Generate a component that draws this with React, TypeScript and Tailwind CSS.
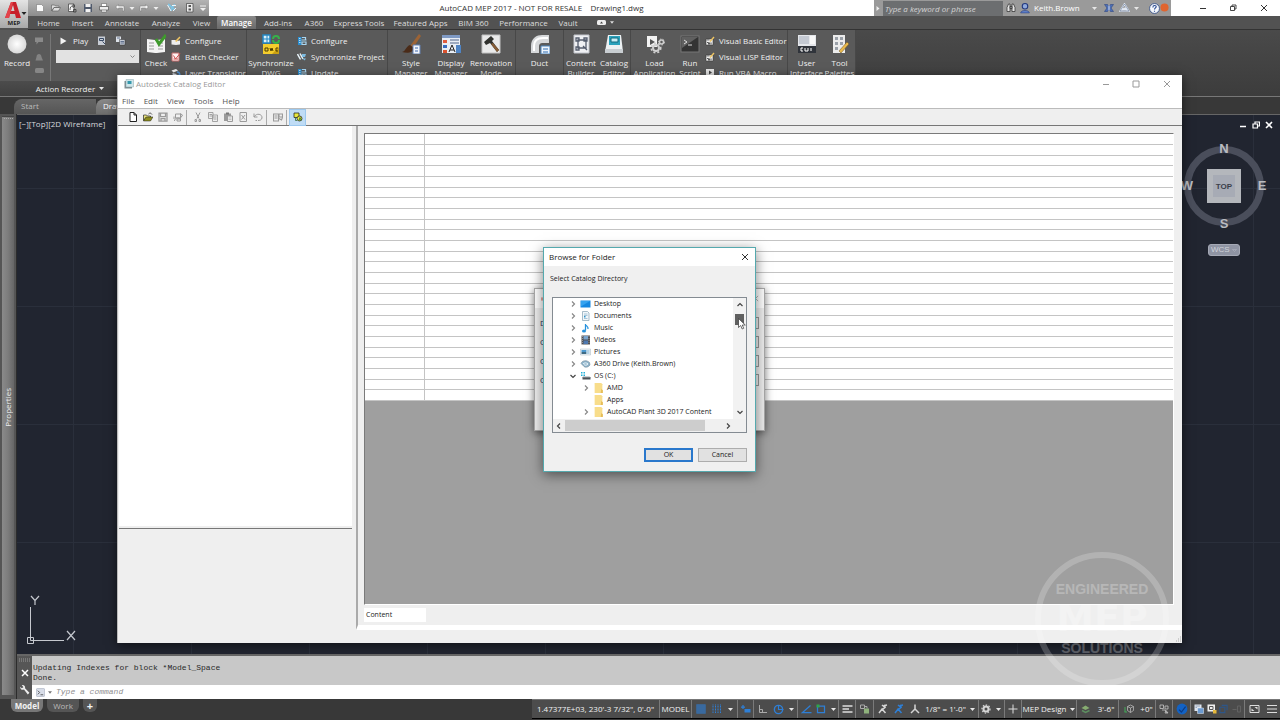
import type { ReactNode } from "react";

/* ---------- small drawing helpers ---------- */

type SvgProps = { w?: number; h?: number; vb?: string; children: ReactNode };

function Svg({ w = 10, h = 10, vb = "0 0 20 20", children }: SvgProps) {
  return (
    <svg width={w} height={h} viewBox={vb} fill="none" aria-hidden="true" className="shrink-0">
      {children}
    </svg>
  );
}

const Caret = ({ color = "#e6e6e6" }: { color?: string }) => (
  <Svg w={5} h={3} vb="0 0 10 6"><path d="M0 0h10L5 6z" fill={color} /></Svg>
);

const CloseX = ({ s = 8, color = "#333", sw = 1 }: { s?: number; color?: string; sw?: number }) => (
  <Svg w={s} h={s} vb="0 0 8 8"><path d="M1 1l6 6M7 1L1 7" stroke={color} strokeWidth={sw} /></Svg>
);

/* ---------- title bar ---------- */

const quickAccess: { label: string; w: string; icon: ReactNode }[] = [
  { label: "New", w: "w-4", icon: <path d="M3 3h10l4 4v10H3z" fill="#fafafa" stroke="#666" /> },
  { label: "Open", w: "w-4", icon: <path d="M1 16V4h6l2 2h7v3H6zM2 16L6 9h13l-4 7z" fill="#dcdcdc" stroke="#666" strokeWidth="1.4" /> },
  { label: "Open from web", w: "w-4", icon: <><path d="M3 2h11v15H3z" fill="#f4f4f4" stroke="#444" strokeWidth="1.5" /><path d="M6 14c0-6 2-8 6-8M12 3v6l4-3zM13 13h5v5h-5z" stroke="#333" strokeWidth="1.5" /></> },
  { label: "Save", w: "w-4", icon: <><path d="M2 2h16v16H2z" fill="#505a6c" /><path d="M5 2h10v6H5zM5 12h10v6H5z" fill="#f2f2f2" /></> },
  { label: "Plot", w: "w-4", icon: <><path d="M5 1h10v6H5zM5 12h10v6H5z" fill="#fff" stroke="#555" /><path d="M1 7h18v7H1z" fill="#eee" stroke="#555" strokeWidth="1.4" /></> },
  { label: "Undo", w: "w-4", icon: <path d="M7 3L1 8l6 5v-3h8v6h3V6H7z" fill="#f4f4f4" stroke="#777" /> },
  { label: "Undo list", w: "w-2", icon: <path d="M5 8h10l-5 6z" fill="#eee" /> },
  { label: "Redo", w: "w-4", icon: <path d="M13 3l6 5-6 5v-3H5v6H2V6h11z" fill="#f4f4f4" stroke="#777" /> },
  { label: "Redo list", w: "w-2", icon: <path d="M5 8h10l-5 6z" fill="#eee" /> },
  { label: "Synchronize", w: "w-6", icon: <><path d="M2 3c5 0 6 8 14 10M16 3C12 6 8 10 8 16" stroke="#7fc3e2" strokeWidth="4" /><path d="M1 4l7 12M10 5h8M12 16l6-6" stroke="#eef6fa" strokeWidth="2" /></> },
  { label: "Project", w: "w-3", icon: <><path d="M3 1h13v17H3z" fill="#ececec" stroke="#444" strokeWidth="1.4" /><path d="M7 4h5v4H7zM7 11h5v4H7z" fill="#555" /></> },
];

function TitleBar() {
  return (
    <div className="flex h-4 bg-white">
      <div className="flex items-center bg-gradient-to-b from-[#b4b4b4] to-[#8c8c8c] pl-1">
        {quickAccess.map((q) => (
          <button key={q.label} aria-label={q.label} className={`flex justify-center ${q.w}`}>
            <Svg>{q.icon}</Svg>
          </button>
        ))}
        <button aria-label="Customize toolbar" className="flex w-[13px] justify-center">
          <Svg w={6} h={7} vb="0 0 12 14"><path d="M0 1h12v2H0zM0 6h12l-6 6z" fill="#f0f0f0" /></Svg>
        </button>
      </div>
      <h1 className="flex-1 whitespace-pre text-center text-[8px] leading-[16px] text-[#333]">
        {"AutoCAD MEP 2017 - NOT FOR RESALE    Drawing1.dwg"}
      </h1>
      <div className="flex w-[297px] items-center bg-[#9a9a9a] text-[8px]">
        <span className="flex w-2 justify-center"><Svg w={4} h={5} vb="0 0 8 10"><path d="M1 0l6 5-6 5z" fill="#f0f0f0" /></Svg></span>
        <input aria-label="Search" placeholder="Type a keyword or phrase" className="ml-px h-[15px] w-[120px] bg-[#6c6e70] px-[2px] italic text-white placeholder:text-[#d4d4d4]" />
        <button aria-label="Find" className="flex w-4 justify-center">
          <Svg><path d="M2 17V9l3-7h3v15zM18 17V9l-3-7h-3v15zM8 7h4v4H8z" fill="#e4e4e4" stroke="#333" strokeWidth="1.5" /></Svg>
        </button>
        <button className="flex w-[78px] items-center gap-[3px] text-white">
          <Svg w={12} h={11}><circle cx="10" cy="6" r="5" fill="#8fa9dc" stroke="#22397f" strokeWidth="2" /><path d="M2 18c1-6 15-6 16 0z" fill="#5f7fc4" stroke="#22397f" /></Svg>
          <span className="flex-1 text-left">Keith.Brown</span>
          <Caret />
        </button>
        <button aria-label="Exchange" className="ml-1 flex w-4 justify-center">
          <Svg><path d="M1 3h6l3 4 3-4h6l-5 7 5 7h-6l-3-4-3 4H1l5-7z" fill="#4f70b5" stroke="#203a7c" /><path d="M10 5v10" stroke="#d9e4fa" strokeWidth="2" /></Svg>
        </button>
        <button aria-label="A360" className="flex w-6 items-center justify-center gap-1">
          <Svg w={11}><path d="M10 2L1 16h18z M5 13l8-3 2 6" stroke="#e2e8f2" strokeWidth="3" /><path d="M10 2L1 16h18z" stroke="#4d6385" /></Svg>
          <Caret />
        </button>
        <button aria-label="Help" className="ml-2 flex items-start">
          <Svg w={11} h={11}><circle cx="10" cy="10" r="9" fill="#f4f7fb" stroke="#304c86" strokeWidth="1.5" /><path d="M7 8c0-5 7-4 6-1-.5 2-3 2-3 5M10 14v2" stroke="#284a92" strokeWidth="2" /></Svg>
          <Svg w={9} h={9}><circle cx="10" cy="10" r="9" fill="#e0652f" /></Svg>
        </button>
      </div>
      <div className="flex w-[109px] items-center justify-end">
        <button aria-label="Minimize" className="flex w-[30px] justify-center"><Svg w={8} h={8} vb="0 0 8 8"><path d="M1 4.5h6" stroke="#333" /></Svg></button>
        <button aria-label="Restore" className="flex w-[30px] justify-center"><Svg w={8} h={8} vb="0 0 8 8"><path d="M1.500 2.500h4v4h-4zM3 2.500v-1.500h4v4H5.500" stroke="#333" strokeWidth=".9" /></Svg></button>
        <button aria-label="Close" className="flex w-[32px] justify-center"><CloseX /></button>
      </div>
    </div>
  );
}

/* ---------- ribbon ---------- */

const tabs: [string, string][] = [
  ["Home", "w-[37px]"], ["Insert", "w-[31px]"], ["Annotate", "w-[48px]"], ["Analyze", "w-[40px]"],
  ["View", "w-[31px]"], ["Manage", "w-[39px]"], ["Add-ins", "w-[44px]"], ["A360", "w-[28px]"],
  ["Express Tools", "w-[62px]"], ["Featured Apps", "w-[61px]"], ["BIM 360", "w-[45px]"],
  ["Performance", "w-[55px]"], ["Vault", "w-[34px]"],
];

function RibbonTabs() {
  return (
    <nav className="flex h-[14px] items-stretch border-b border-[#333] bg-[#525252] pl-[2px] text-[8px] leading-[13px] text-[#dcdcdc]">
      {tabs.map(([name, w]) => (
        <a
          key={name}
          href="#"
          className={`block whitespace-nowrap text-center ${w} ${name === "Manage" ? "rounded-t-[2px] bg-gradient-to-b from-[#8a8a8a] to-[#6a6a6a] font-semibold text-white" : ""}`}
        >
          {name}
        </a>
      ))}
      <button aria-label="Minimize ribbon" className="ml-3 flex items-center gap-1">
        <Svg w={9} h={5} vb="0 0 18 10"><rect width="18" height="10" rx="3" fill="#eee" /><path d="M6 7l3-4 3 4z" fill="#444" /></Svg>
        <Svg w={4} h={3} vb="0 0 10 6"><path d="M0 0h10L5 6z" fill="#ddd" /></Svg>
      </button>
    </nav>
  );
}

function BigButton({ w, lines, icon }: { w: string; lines: string[]; icon: ReactNode }) {
  return (
    <button className={`flex flex-col items-center ${w}`}>
      <Svg w={20} h={20}>{icon}</Svg>
      <span className="mt-1 flex flex-col items-center whitespace-nowrap leading-[10px]">
        {lines.map((l) => <span key={l}>{l}</span>)}
      </span>
    </button>
  );
}

function SmallList({ items }: { items: [string, ReactNode][] }) {
  return (
    <div className="-mt-px flex flex-col">
      {items.map(([label, icon]) => (
        <button key={label} className="flex h-4 items-center gap-1 whitespace-nowrap">
          <Svg>{icon}</Svg>
          {label}
        </button>
      ))}
    </div>
  );
}

function Panel({ w, children }: { w: string; children: ReactNode }) {
  return <section className={`flex shrink-0 border-r border-[#484848] ${w}`}>{children}</section>;
}

const syncIcon = <><path d="M2 2h7v16H2z" fill="#2d8fd0" /><path d="M4 5h3M4 9h3M4 13h3" stroke="#d8f0ff" strokeWidth="1.6" /><path d="M10 3h7v5M19 8H9M10 12h8v5h-8z" stroke="#a8d6f2" strokeWidth="2.4" /></>;
const syncProjectIcon = <><path d="M1 4l6 11M6 3l6 11" stroke="#e8f4fa" strokeWidth="3" /><path d="M10 4h8l-2 6h-6zM11 13h7l-3 4z" fill="#7dbbe0" /></>;
const editorIcon = <><path d="M2 6h14v12H2z" fill="#ececec" stroke="#333" /><path d="M4 13h3v4M9 13v4M12 13v4" stroke="#333" strokeWidth="1.6" /><path d="M9 10l8-9 2 2-8 9z" fill="#f0c560" /><path d="M2 6h7v3H2z" fill="#888" /></>;

function Ribbon() {
  return (
    <div className="flex h-[67px] border-b border-[#777] bg-[#5a5a5a] text-[8px] text-[#f0f0f0]">
      <Panel w="w-[141px] flex-col">
        <div className="flex h-[51px] pt-1">
          <button className="flex w-[34px] flex-col items-center">
            <Svg w={20} h={20}>
              <defs><radialGradient id="rec"><stop offset="0" stopColor="#fff" /><stop offset="1" stopColor="#d9d9d9" /></radialGradient></defs>
              <circle cx="10" cy="10" r="9.500" fill="url(#rec)" />
            </Svg>
            <span className="mt-1 leading-[10px]">Record</span>
          </button>
          <div className="flex w-[17px] flex-col items-center gap-[6px] border-r border-[#777] pr-[6px] pt-[2px]">
            <Svg><path d="M2 3h16v9h-9l-4 5v-5H2z" fill="#8a8a8a" /></Svg>
            <Svg><path d="M5 10c0-8 10-8 10 0l3 7H3z" fill="#838383" /></Svg>
            <Svg w={9} h={5} vb="0 0 18 10"><rect width="18" height="10" rx="3" fill="#868686" /></Svg>
          </div>
          <div className="flex flex-1 flex-col pl-[5px]">
            <div className="flex h-[14px] items-center">
              <button className="ml-1 flex items-center gap-[6px]"><Svg w={7} h={8} vb="0 0 14 16"><path d="M1 1l12 7-12 7z" fill="#f4f4f4" /></Svg>Play</button>
              <button aria-label="Manage macros" className="ml-[9px]"><Svg><path d="M2 1h14v17H2z" fill="#c8cdd5" /><path d="M5 5h8v4H5zM11 11l5 5" stroke="#394a65" strokeWidth="2" /></Svg></button>
              <button aria-label="Preferences" className="ml-2"><Svg w={11}><path d="M1 1h10v11H1z" fill="#dce1e8" /><path d="M8 7h11v11H8z" fill="#c4cad5" stroke="#333" /><path d="M3 4h6M10 11h7M10 14h7" stroke="#425475" strokeWidth="1.500" /></Svg></button>
            </div>
            <select aria-label="Macro" className="mt-[2px] h-[13px] w-[83px] appearance-none bg-[#e2e2e2] bg-[url('data:image/svg+xml,%3Csvg%20xmlns=%22http://www.w3.org/2000/svg%22%20width=%225%22%20height=%224%22%3E%3Cpath%20d=%22M.5%20.5l2%202%202-2%22%20fill=%22none%22%20stroke=%22%23888%22/%3E%3C/svg%3E')] bg-[position:right_4px_center] bg-no-repeat">
              <option value=""></option>
            </select>
          </div>
        </div>
        <button className="flex flex-1 items-center justify-center gap-1 bg-gradient-to-b from-[#4c4c4c] to-[#404040]">Action Recorder <Caret /></button>
      </Panel>
      <Panel w="w-[106px] pt-1">
        <BigButton w="w-[30px]" lines={["Check"]} icon={<><path d="M1 5l8 1 1 1 1-1 8-1v13l-8 1h-2l-8-1z" fill="#f4f4f4" /><path d="M3 9h5M3 12h5M3 15h5M12 9h5M12 12h5M12 15h5" stroke="#999" /><path d="M10 5l3 5 7-9" stroke="#3f9a2d" strokeWidth="3" /></>} />
        <SmallList items={[
          ["Configure", <><path d="M1 8h8l2 2 7-1v8l-8 1-9-1z" fill="#ececec" /><path d="M8 10L17 1l2 2-8 9z" fill="#ecc464" /></>],
          ["Batch Checker", <><path d="M2 2h14v16H2z" fill="#fdf1f1" stroke="#c56b6b" strokeWidth="2" /><path d="M5 7l4 7 9-11M5 14h9" stroke="#cf4d4d" strokeWidth="2" /></>],
          ["Layer Translator", <><path d="M1 5l9-3 4 3-9 4z" fill="#f4f4f4" /><path d="M3 10l8 2v6H4z" fill="#d7dde6" /><path d="M12 8c5 0 6 3 6 8l-5-2" stroke="#5496d8" strokeWidth="3" /></>],
        ]} />
      </Panel>
      <Panel w="w-[141px] pt-1">
        <BigButton w="w-[48px]" lines={["Synchronize", "DWG"]} icon={<><path d="M2 10h16v10H2z" fill="#f5cd2c" /><path d="M11 20l7-7v7z" fill="#caa012" /><path d="M2 1h7v8H2z" fill="#daf0fa" stroke="#2587c2" strokeWidth="1.500" /><path d="M2 5h7M6 1v8" stroke="#2587c2" /><path d="M12 5a3 3 0 0 1 6 0M18 6a3 3 0 0 1-6 0" stroke="#36b24a" strokeWidth="2" /><path d="M4 14h3v3H4zM9 14l1 3 1-3 1 3M17 14h-2v3h2" stroke="#4b3c00" /></>} />
        <div className="w-[2px]" />
        <SmallList items={[["Configure", syncIcon], ["Synchronize Project", syncProjectIcon], ["Update", syncIcon]]} />
      </Panel>
      <Panel w="w-[128px] pt-1 pl-[2px]">
        <BigButton w="w-[42px]" lines={["Style", "Manager"]} icon={<><path d="M9 12L18 0l2 2-8 12z" fill="#9c6335" /><path d="M9 11l4 3c-2 6-8 5-12 4 4-1 4-6 8-7z" fill="#4a2b18" /><path d="M12 11h7v9h-7z" fill="#f2f5fa" stroke="#6481b3" /><path d="M14 14h3M14 17h3" stroke="#3d66ac" /></>} />
        <BigButton w="w-[38px]" lines={["Display", "Manager"]} icon={<><path d="M1 1h18v18H1z" fill="#e9eef5" /><path d="M1 1h18v3H1z" fill="#7f9ac4" /><path d="M2 6h4v3H2z" fill="#e15b3d" /><path d="M2 11h4v3H2z" fill="#386bc0" /><path d="M2 16h4v3H2z" fill="#d9522e" /><path d="M9 6h9M9 9h9" stroke="#52668a" /><path d="M8 18l3-7 3 7M9 16h4" stroke="#222" /><path d="M15 11h5v8h-5z" fill="#4f84c4" /></>} />
        <BigButton w="w-[42px]" lines={["Renovation", "Mode"]} icon={<><path d="M1 1h18v18H1z" fill="#eaeaea" stroke="#c2c2c2" /><path d="M3 8l7-6 3 3-2 2 7 9-2 2-7-9-4 2z" fill="#31322e" /><path d="M12 9l6 7-2 2-6-8z" fill="#875d36" /></>} />
      </Panel>
      <Panel w="w-[48px] pt-1">
        <BigButton w="w-[47px]" lines={["Duct"]} icon={<><path d="M1 19V12C1 4 7 1 12 1h7v8h-6c-3 0-4 1-4 4v6z" fill="#d6d8da" /><path d="M4 17v-5c0-6 4-8 9-8h5" stroke="#fff" strokeWidth="2" /><path d="M11 12h9v8h-9z" fill="#eef4fb" stroke="#4b84bd" /><path d="M13 15h5M13 18h5" stroke="#2c6cb2" /></>} />
      </Panel>
      <Panel w="w-[67px] pt-1">
        <BigButton w="w-[34px]" lines={["Content", "Builder"]} icon={<><path d="M3 1h15v18H3z" fill="#f0f1f4" stroke="#c2c5cc" /><path d="M7 6h8v8H7z M5 4h3v3H5zM13 4h3v3h-3zM5 13h3v3H5zM12 12l4 4" stroke="#555d6e" strokeWidth="1.300" /></>} />
        <BigButton w="w-[32px]" lines={["Catalog", "Editor"]} icon={<><path d="M4 1h13l2 17H1z" fill="#edf1f3" /><path d="M5 2h11v9H5z" fill="#2ba2bc" /><path d="M7 4h7v4H7z" fill="#c9eef5" stroke="#126b80" /><path d="M1 15h18v4H1z" fill="#c9ced2" /></>} />
      </Panel>
      <Panel w="w-[157px] pt-1">
        <BigButton w="w-[47px]" lines={["Load", "Application"]} icon={<><path d="M2 2h10v11H2z" fill="#f3f3f3" /><path d="M5 5l5 3-5 3z" fill="#555" /><circle cx="11" cy="14" r="3" stroke="#d0d0d0" strokeWidth="2" /><circle cx="16.500" cy="8" r="2" stroke="#d0d0d0" strokeWidth="1.500" /><circle cx="11" cy="14" r="4.800" stroke="#d0d0d0" strokeWidth="1.500" strokeDasharray="2 2" /><circle cx="16.500" cy="8" r="3" stroke="#d0d0d0" strokeDasharray="1.500 1.500" /></>} />
        <BigButton w="w-[24px]" lines={["Run", "Script"]} icon={<><rect x="1" y="2" width="18" height="16" fill="#333" stroke="#777" /><path d="M2 3h16L2 14z" fill="#606060" /><path d="M4 6l3 2-3 2M8 11h4" stroke="#ddd" /></>} />
        <div className="w-[3px]" />
        <SmallList items={[
          ["Visual Basic Editor", editorIcon],
          ["Visual LISP Editor", editorIcon],
          ["Run VBA Macro", <><path d="M2 2h16v14H2z" fill="#e6e6e6" /><path d="M8 5l6 4-6 4z" fill="#444" /></>],
        ]} />
      </Panel>
      <Panel w="w-[68px] pt-1 pl-px">
        <BigButton w="w-[35px]" lines={["User", "Interface"]} icon={<><path d="M1 1h18v18H1z" fill="#e4e6ea" /><path d="M2 2h10v8H2z" fill="#c4c9d2" /><path d="M13 2h5v8h-5z" fill="#f8f8f8" /><path d="M1 12h18v7H1z" fill="#30343b" /><path d="M6 14H4v3h2M8 14v3h3v-3M14 14v3" stroke="#fff" /></>} />
        <BigButton w="w-[31px]" lines={["Tool", "Palettes"]} icon={<><path d="M3 1h12v18H3z" fill="#ececec" /><path d="M5 3h3v3H5zM10 3h3v3h-3zM5 8h3v3H5zM10 8h3v3h-3zM5 13h3v3H5z" fill="#9aa0a8" /><path d="M9 17l8-9 2 2-8 9z" fill="#e8b84c" stroke="#6b5220" strokeWidth=".5" /></>} />
      </Panel>
      <div className="flex-1 bg-gradient-to-b from-[#4a4a4a] to-[#3c3c3c]" />
    </div>
  );
}

/* ---------- drawing area ---------- */

function ViewCube() {
  return (
    <div className="absolute right-[12px] top-[23px] flex flex-col items-center font-['Liberation_Sans',sans-serif]">
      <svg width="88" height="96" viewBox="0 0 88 96" aria-label="View cube" className="block">
        <circle cx="44" cy="48" r="36.500" fill="none" stroke="#4a4e5b" strokeWidth="7" />
        <rect x="27" y="31" width="34" height="34" fill="#b4b7bc" />
        <rect x="33" y="37" width="22" height="22" fill="#a7abb5" />
        <g fontWeight="bold" fill="#b9bbc0" textAnchor="middle">
          <text x="44" y="15" fontSize="13">N</text>
          <text x="44" y="90" fontSize="13">S</text>
          <text x="82" y="52" fontSize="13">E</text>
          <text x="7" y="52" fontSize="13">W</text>
          <text x="44" y="51" fontSize="8" fill="#3b3f4b">TOP</text>
        </g>
      </svg>
      <button className="mt-[10px] flex h-[12px] w-8 items-center justify-between rounded-[3px] border border-[#a5a9b5] bg-[#8f94a3] px-[2px] text-[8px] leading-none text-[#d0d3da]">
        WCS <Svg w={5} h={3} vb="0 0 10 6"><path d="M1 1h8L5 5z" stroke="#b5b9c4" /></Svg>
      </button>
    </div>
  );
}

function DrawingArea() {
  return (
    <main className="relative flex flex-1 flex-col overflow-hidden border-t border-[#666] bg-[#212530] bg-[linear-gradient(to_right,#2a2f3b_1px,transparent_1px),linear-gradient(to_bottom,#2a2f3b_1px,transparent_1px)] bg-[size:118px_118px] bg-[position:56px_73px] text-[#d8dade]">
      <div className="flex items-start justify-between pl-[2px] pr-[7px] pt-[2px] text-[8px]">
        <span className="leading-[14px]">[−][Top][2D Wireframe]</span>
        <div className="flex items-center gap-[5px] pt-1">
          <button aria-label="Minimize drawing"><Svg w={8} h={8} vb="0 0 8 8"><path d="M1 5.500h6" stroke="#fff" strokeWidth="1.500" /></Svg></button>
          <button aria-label="Restore drawing"><Svg w={8} h={8} vb="0 0 8 8"><path d="M1 3h4.500v4H1zM3 2.500V1h4.500v4H6" stroke="#fff" strokeWidth="1.200" /></Svg></button>
          <button aria-label="Close drawing"><CloseX color="#fff" sw={1.6} /></button>
        </div>
      </div>
      <ViewCube />
      <svg width="60" height="54" viewBox="0 0 60 54" className="mb-[6px] ml-2 mt-auto block" aria-label="UCS axes">
        <path d="M5.500 13v30M9 46.500h30M2.500 43.500h6v6h-6z M5.500 40v6.500h6" fill="none" stroke="#c5c8ce" />
        <path d="M6 2l4 4.500L14 2M10 6v5M42 37l8 9M50 37l-8 9" fill="none" stroke="#c5c8ce" strokeWidth="1.200" />
      </svg>
    </main>
  );
}

function PropertiesDock() {
  return (
    <aside className="flex w-[17px] border-r border-[#2c2c2c] bg-[#555] p-[2px] pb-1">
      <div className="flex flex-1 flex-col items-center border-t border-[#444] bg-gradient-to-r from-[#8a8a8a] via-[#7c7c7c] to-[#666]">
        <Svg w={9} h={4} vb="0 0 9 4"><path d="M0 1.500h9" stroke="#aaa" strokeDasharray="1 1" /></Svg>
        <span className="mb-[268px] mt-auto rotate-180 text-[8px] leading-[12px] text-[#ececec] [writing-mode:vertical-rl]">Properties</span>
      </div>
    </aside>
  );
}

function CommandLine() {
  return (
    <section className="flex h-[45px] border-t-2 border-[#666] font-['Liberation_Mono',monospace] text-[8px]">
      <div className="flex w-[15px] flex-col items-center justify-between bg-[#565656] py-[2px]">
        <Svg w={11} h={4} vb="0 0 11 4"><path d="M0 1h11M0 3h11" stroke="#999" strokeDasharray="1 1" /></Svg>
        <CloseX s={8} color="#fff" sw={1.5} />
        <Svg w={11} h={14} vb="0 0 20 24"><path d="M2 6c0 5 4 7 7 5l7 9 3-3-8-8c1-4-2-7-6-6l3 4-3 2z" fill="#ececec" /></Svg>
      </div>
      <div className="flex flex-1 flex-col">
        <div className="flex flex-1 flex-col justify-end bg-[#c8c8c8] px-px pb-[2px] leading-[10px] text-[#2a2a2a]">
          <p>Updating Indexes for block *Model_Space</p>
          <p>Done.</p>
        </div>
        <label className="flex h-[14px] items-center gap-[3px] bg-white pl-1">
          <Svg w={9} h={9}><rect x="1" y="1" width="18" height="18" rx="2" fill="#d8dde8" stroke="#8c96ab" /><path d="M4 6l4 4-4 4M10 15h6" stroke="#333" strokeWidth="1.600" /></Svg>
          <Svg w={4} h={3} vb="0 0 10 6"><path d="M0 0h10L5 6z" fill="#777" /></Svg>
          <input aria-label="Command" placeholder="Type a command" className="ml-px flex-1 italic outline-none placeholder:text-[#909090]" />
        </label>
      </div>
    </section>
  );
}

/* ---------- status bar ---------- */

function Cell({ w, sep, children, label }: { w: string; sep?: boolean; children: ReactNode; label?: string }) {
  return (
    <button aria-label={label} className={`flex h-[18px] shrink-0 items-center justify-center whitespace-nowrap ${w} ${sep ? "border-r border-[#7a7a7a]" : ""}`}>
      {children}
    </button>
  );
}

const blue = "#2e7fd6";
const person = (c: string) => <><path d="M8 2l6 5-5 4 6 7M9 9l-7 9M13 3l5-1" stroke={c} strokeWidth="3" /><circle cx="13" cy="4" r="2.500" fill={c} /></>;

function StatusBar() {
  return (
    <footer className="flex h-[21px] items-start justify-between bg-[#383838] text-[8px] text-[#f2f2f2]">
      <div className="flex items-start pl-[11px]">
        <button className="h-[13px] w-[32px] rounded-b-[6px] bg-[#777] font-bold leading-[13px]">Model</button>
        <button className="ml-1 h-[13px] w-[32px] rounded-b-[6px] bg-[#555] leading-[13px] text-[#bbb]">Work</button>
        <button className="ml-1 h-[13px] w-[14px] rounded-b-[6px] bg-[#555] text-[11px] font-bold leading-[12px]">+</button>
      </div>
      <div className="flex border-y border-b-black border-t-[#777] bg-[#4c4c4c]">
        <Cell w="w-[128px]" sep>1.47377E+03, 230'-3 7/32", 0'-0"</Cell>
        <Cell w="w-[32px]" sep>MODEL</Cell>
        <Cell w="w-[18px]" label="Grid"><Svg><path d="M2 1v18M6 1v18M10 1v18M14 1v18M18 1v18M1 2h18M1 6h18M1 10h18M1 14h18M1 18h18" stroke={blue} strokeWidth="1.500" /></Svg></Cell>
        <Cell w="w-[14px]" label="Snap"><Svg><path d="M2 1v18M7 1v18M12 1v18M17 1v18" stroke={blue} strokeWidth="2" strokeDasharray="2 1" /></Svg></Cell>
        <Cell w="w-[14px]" sep label="Snap menu"><Caret /></Cell>
        <Cell w="w-[16px]" sep label="Dynamic input"><Svg w={11}><path d="M1 6h8M5 2v8" stroke={blue} strokeWidth="2.500" /><path d="M8 10h12v7H8z" fill={blue} /></Svg></Cell>
        <Cell w="w-[17px]" label="Ortho"><Svg><path d="M3 2v15h15M3 11h6v6" stroke="#aaa" strokeWidth="2" /></Svg></Cell>
        <Cell w="w-[14px]" label="Polar"><Svg w={11} h={11}><circle cx="10" cy="10" r="7.500" stroke={blue} strokeWidth="2.500" /><path d="M10 2v8h9" stroke={blue} strokeWidth="2" /></Svg></Cell>
        <Cell w="w-[13px]" sep label="Polar menu"><Caret /></Cell>
        <Cell w="w-[16px]" label="Object tracking"><Svg w={11}><path d="M18 3L2 17h18" stroke={blue} strokeWidth="2.500" /></Svg></Cell>
        <Cell w="w-[14px]" label="Object snap"><Svg><path d="M3 4h14v13H3z" stroke={blue} strokeWidth="2.500" /><rect x="1" y="1" width="6" height="6" fill="#2fa64a" /></Svg></Cell>
        <Cell w="w-[11px]" sep label="Object snap menu"><Caret /></Cell>
        <Cell w="w-[17px]" sep label="Lineweight"><Svg w={11}><path d="M0 4h20M0 10h13M0 16h20" stroke="#ddd" strokeWidth="3" /></Svg></Cell>
        <Cell w="w-[18px]" sep label="Cycling"><Svg><path d="M1 2h8v7H1zM9 5h5v4" stroke="#aaa" strokeWidth="2" /><path d="M8 9h10v10H8z" fill="#8fb27c" /></Svg></Cell>
        <Cell w="w-[17px]" label="Annotation visibility"><Svg>{person("#d5d5d5")}</Svg></Cell>
        <Cell w="w-[16px]" label="Auto scale"><Svg>{person(blue)}</Svg></Cell>
        <Cell w="w-[15px]" label="Annotation scale icon"><Svg><path d="M10 1v11M10 10l-8 8M10 10l8 8" stroke="#d5d5d5" strokeWidth="3" /></Svg></Cell>
        <Cell w="w-[57px]" sep><span className="mr-1">1/8" = 1'-0"</span><Caret /></Cell>
        <Cell w="w-[14px]" label="Workspace"><Svg><circle cx="10" cy="10" r="5" stroke="#d5d5d5" strokeWidth="4" /><circle cx="10" cy="10" r="8" stroke="#d5d5d5" strokeWidth="2.500" strokeDasharray="3 3" /></Svg></Cell>
        <Cell w="w-[12px]" sep label="Workspace menu"><Caret /></Cell>
        <Cell w="w-[17px]" sep label="Annotation monitor"><Svg><path d="M10 1v18M1 10h18" stroke="#ddd" strokeWidth="2" /></Svg></Cell>
        <Cell w="w-[55px]" sep><span className="mr-1">MEP Design</span><Caret /></Cell>
        <Cell w="w-[17px]" label="Elevation"><Svg w={11}><path d="M2 8l8-5 8 5-8 4z" fill="#86ac70" /><path d="M3 13l7 4 8-4" stroke="#5d8f60" strokeWidth="3" /></Svg></Cell>
        <Cell w="w-[25px]" sep>3'-6"</Cell>
        <Cell w="w-[19px]" label="Elevation offset"><Svg w={12}><path d="M7 5l6-3 6 3v8l-6 4-6-4zM7 5l6 3 6-3M13 8v9" stroke="#bbb" strokeWidth="1.500" /><path d="M2 6v10M1 16h5" stroke="#42ab58" strokeWidth="2" /></Svg></Cell>
        <Cell w="w-[18px]" sep>+0"</Cell>
        <Cell w="w-[17px]" sep label="Isolate"><Svg><path d="M2 2h7v7H2zM12 4h6v6h-6zM6 12h6l4 6M14 13l4 5h-6z" stroke="#ccc" strokeWidth="1.500" /></Svg></Cell>
        <Cell w="w-[18px]" sep label="Hardware"><Svg w={12} h={12}><circle cx="10" cy="10" r="9" fill="#1262c4" /><path d="M5 11l4 4 7-9" stroke="#0b3c86" strokeWidth="2" /></Svg></Cell>
        <Cell w="w-[15px]" label="Quick properties"><Svg><path d="M1 1h14v13H1z" fill="#dfe5ee" /><path d="M7 8h12v11H7z" fill="#6b9ad0" stroke="#e8eef6" /><path d="M3 4h9M3 7h3" stroke="#52688a" /></Svg></Cell>
        <Cell w="w-[11px]" label="Lock UI"><Svg><path d="M1 1h15v14H1z" fill="#f0f0f0" /><path d="M5 5h7v6H5z" stroke="#555" strokeWidth="2" /><path d="M12 12h7v7h-7z" fill="#e5b83c" /></Svg></Cell>
        <Cell w="w-[13px]" label="Graphics"><Svg w={9}><path d="M2 6h11v12H2zM6 2h12v11" stroke="#2d5689" strokeWidth="2.500" /></Svg></Cell>
        <Cell w="w-[15px]" sep label="Surface hatch"><Svg><path d="M1 11h8M11 4h6v12h-6z" stroke="#626262" strokeWidth="2" /></Svg></Cell>
        <Cell w="w-[18px]" label="Clean screen"><Svg w={11}><path d="M1 3h18v14H1z" stroke="#ddd" strokeWidth="2" /><path d="M10 6h6v5zM4 9v5h6z" fill="#ddd" /></Svg></Cell>
        <Cell w="w-[17px]" label="Customization"><Svg><path d="M0 3h20M0 10h20M0 17h20" stroke="#ddd" strokeWidth="2" /></Svg></Cell>
      </div>
    </footer>
  );
}

/* ---------- catalog editor window ---------- */

const gray = "#9a9a9a";
const tools: { label: string; on?: boolean; sep?: boolean; icon: ReactNode }[] = [
  { label: "New catalog", icon: <path d="M4 1h8l5 5v13H4zM12 1v5h5" fill="#fff" stroke="#222" strokeWidth="2" /> },
  { label: "Open catalog", icon: <><path d="M1 17V6h6l2 2h6v3H6z" fill="#e9e27a" stroke="#333" strokeWidth="1.500" /><path d="M1 18l5-8h14l-5 8z" fill="#8d8d1c" stroke="#222" /><path d="M11 4c3-3 5-2 7 1" stroke="#222" strokeWidth="1.500" /></> },
  { label: "Save catalog", icon: <path d="M2 2h16v16H2zM5 2h10v7H5zM6 13h8v5H6z" stroke={gray} strokeWidth="2.500" /> },
  { label: "Regenerate", sep: true, icon: <path d="M5 4h10v8H5zM3 18c0-6 8-8 13-4M14 3l5 3-3 5M2 9v5M8 14h7v4H8z" stroke={gray} strokeWidth="2" /> },
  { label: "Cut", icon: <path d="M6 1l6 12M14 1L8 13M4 15h3v4H4zM12 15h3v4h-3z" stroke={gray} strokeWidth="2" /> },
  { label: "Copy", icon: <path d="M1 1h9v12H1zM9 6h10v13H9zM3 5h5M3 8h5M11 10h6M11 14h6" fill="#eee" stroke={gray} strokeWidth="1.800" /> },
  { label: "Paste", icon: <><path d="M2 3h14v15H2z" fill={gray} /><path d="M6 1h6v4H6z" fill="#777" /><path d="M9 8h10v11H9z" fill="#eee" stroke={gray} strokeWidth="2" /><path d="M11 12h6M11 15h6" stroke={gray} /></> },
  { label: "Delete", icon: <path d="M4 1h13v18H4zM7 6l7 9M14 6l-7 9" stroke={gray} strokeWidth="2" /> },
  { label: "Undo", sep: true, icon: <path d="M2 3v7h7M2 10c5-9 17-6 16 2-1 4-4 5-8 5M5 17h3" stroke={gray} strokeWidth="2" /> },
  { label: "Test", sep: true, icon: <path d="M1 4h10v14H1zM3 8h6M3 12h6M12 4h7v6h-7zM12 13l5 3 2-5" stroke={gray} strokeWidth="2.200" /> },
  { label: "Show preview", on: true, icon: <><path d="M2 2h10v9H2z" fill="#e8e83c" stroke="#222" strokeWidth="1.500" /><circle cx="13" cy="13" r="5" fill="#e8e83c" stroke="#222" strokeWidth="1.500" /><path d="M5 12v5h3M14 11l3 5h-5z" stroke="#27662f" strokeWidth="1.500" /></> },
];

function CatalogEditor() {
  return (
    <section aria-label="Autodesk Catalog Editor" className="absolute bottom-[77px] left-[117px] right-[98px] top-[75px] flex flex-col border-l border-[#bbb] bg-[#efefef] text-[8px] text-[#555] shadow-[0_2px_10px_rgba(0,0,0,0.55)]">
      <header className="flex h-[18px] items-center bg-white pl-[6px] text-[#999]">
        <Svg><path d="M4 1h15v15H4z" fill="#cfe6ea" stroke="#8ba6ad" /><path d="M1 4h3v12h12v3H1z" fill="#7e8f94" /><path d="M7 4h8v6H7z" fill="#3598ad" /></Svg>
        <h2 className="ml-[2px] flex-1">Autodesk Catalog Editor</h2>
        <button aria-label="Minimize window" className="flex w-[30px] justify-center"><Svg w={8} h={8} vb="0 0 8 8"><path d="M1 4.500h6" stroke="#999" /></Svg></button>
        <button aria-label="Maximize window" className="flex w-[30px] justify-center"><Svg w={8} h={8} vb="0 0 8 8"><path d="M1 1h6v6H1z" stroke="#999" /></Svg></button>
        <button aria-label="Close window" className="flex w-[31px] justify-center"><CloseX color="#999" /></button>
      </header>
      <nav className="flex h-[16px] items-center gap-[9px] border-b border-[#bbb] bg-white pl-1 leading-[10px]">
        {["File", "Edit", "View", "Tools", "Help"].map((m) => <button key={m}>{m}</button>)}
      </nav>
      <div className="flex h-[17px] items-center border-b border-[#777] pl-[7px]">
        {tools.map((t) => (
          <div key={t.label} className={`flex ${t.sep ? "mr-[3px] border-r border-[#aaa] pr-px" : ""}`}>
            <button aria-label={t.label} className={`flex h-[15px] w-[15px] items-center justify-center ${t.on ? "bg-[#bfdcf5] outline outline-[#9cc8ee]" : ""}`}>
              <Svg>{t.icon}</Svg>
            </button>
          </div>
        ))}
      </div>
      <div className="flex min-h-0 flex-1 gap-1 pl-px">
        <div className="flex w-[233px] shrink-0 flex-col gap-[2px]">
          <div className="flex-1 bg-white" aria-label="Catalog tree" />
          <div className="h-[102px] border-t border-[#777]" />
        </div>
        <div className="flex flex-1 flex-col border-b-[5px] border-l-2 border-b-white border-l-[#aaa] pl-[6px] pr-[8px] pt-[7px]">
          <div className="min-h-0 flex-1 overflow-hidden border border-[#7a7a7a] border-b-white border-r-white bg-[#9f9f9f]">
            <table aria-label="Catalog content" className="w-full table-fixed border-separate border-spacing-0 bg-white">
              <colgroup><col className="w-[60px]" /><col /></colgroup>
              <tbody>
                {Array.from({ length: 25 }, (_, i) => (
                  <tr key={i} className={i % 3 === 2 ? "h-[10px]" : "h-[11px]"}>
                    <td className="border-b border-r border-[#c4c4c4] p-0" />
                    <td className="border-b border-[#c4c4c4] p-0" />
                  </tr>
                ))}
              </tbody>
            </table>
          </div>
          <div className="flex h-[20px] items-start pt-[3px]">
            <button className="h-[14px] w-[62px] bg-white pl-[2px] text-left text-[7px] leading-[14px] text-[#222]">Content</button>
          </div>
        </div>
      </div>
      <div className="flex h-[13px] items-end justify-end">
        <Svg w={7} h={7} vb="0 0 7 7"><path d="M5 1h1M3 3h1M5 3h1M1 5h1M3 5h1M5 5h1" stroke="#aaa" /></Svg>
      </div>
    </section>
  );
}

/* ---------- dialogs ---------- */

function CatalogDialog() {
  return (
    <section aria-label="New catalog" className="absolute left-[534px] top-[288px] flex h-[143px] w-[231px] flex-col border border-[#aaa] bg-[#efefef] text-[8px] text-[#335] shadow-[0_2px_8px_rgba(0,0,0,0.5)]">
      <div className="flex h-[19px] items-center justify-between bg-white pl-[6px] pr-[5px]"><Svg w={4} h={8}><path d="M0 2h20v16H0z" fill="#e8a6a0" /></Svg><CloseX s={7} color="#aaa" /></div>
      <div className="flex flex-col gap-[7px] px-[5px] pt-[9px]">
        {["D", "C", "C", "C"].map((c, i) => (
          <div key={i} className="flex h-3 items-center justify-between">
            <span>{c}</span>
            <span className="h-3 w-8 border border-[#999]" />
          </div>
        ))}
      </div>
    </section>
  );
}

const folder = <><path d="M3 1h12l2 2v16H3z" fill="#f8dd8b" /><path d="M15 12l3 2v5h-4z" fill="#e6bd58" /></>;
const nodes: { label: string; depth: number; state?: "open" | "closed"; icon: ReactNode }[] = [
  { label: "Desktop", depth: 0, state: "closed", icon: <><path d="M0 3h20v14H0z" fill="#1687e0" /><path d="M1 4h18L1 15z" fill="#35a2ef" /></> },
  { label: "Documents", depth: 0, state: "closed", icon: <><path d="M4 1h10l3 3v15H4z" fill="#f2f7fa" stroke="#8ca7b8" strokeWidth="1.500" /><path d="M7 6h7M7 9h7M7 15h7" stroke="#5a93b8" /><path d="M7 10h3v3H7z" fill="#2e92c8" /></> },
  { label: "Music", depth: 0, state: "closed", icon: <><path d="M10 2v13M10 2c1 5 6 4 5 10" stroke="#2491dd" strokeWidth="2.500" /><ellipse cx="7" cy="16" rx="4" ry="3" fill="#2491dd" /></> },
  { label: "Videos", depth: 0, state: "closed", icon: <><path d="M2 1h17v18H2z" fill="#4e4e52" /><path d="M6 2h9v7H6z" fill="#78a3ce" /><path d="M6 11h9v7H6z" fill="#4c78b0" /><path d="M4 2v17M17 2v17" stroke="#ddd" strokeDasharray="2 2" /></> },
  { label: "Pictures", depth: 0, state: "closed", icon: <><path d="M0 4h20v12H0z" fill="#eef3f7" stroke="#a6b4be" /><path d="M2 6h10v4H2z" fill="#4c98cf" /><path d="M2 10h10v4H2z" fill="#3e6b85" /><path d="M12 6h6v8h-6z" fill="#b5d3e6" /></> },
  { label: "A360 Drive (Keith.Brown)", depth: 0, state: "closed", icon: <><path d="M1 9c2-6 11-8 17-2l1 5c-4 5-10 6-13 2z" fill="#8fb4ca" stroke="#60798a" /><path d="M5 10c3-3 7-3 10 0-3 3-6 3-8 1" stroke="#eaf4fa" strokeWidth="2" /></> },
  { label: "OS (C:)", depth: 0, state: "open", icon: <><path d="M1 2h3v3H1zM6 2h3v3H6zM1 7h3v3H1zM6 7h3v3H6z" fill="#22b0d8" /><path d="M4 12h16v5H4z" fill="#4c5257" /><path d="M5 11h13l2 2H4z" fill="#9aa2a8" /></> },
  { label: "AMD", depth: 1, state: "closed", icon: folder },
  { label: "Apps", depth: 1, icon: folder },
  { label: "AutoCAD Plant 3D 2017 Content", depth: 1, state: "closed", icon: folder },
  { label: "", depth: 1, icon: folder },
];

const Chevron = ({ d, color = "#444" }: { d: string; color?: string }) => (
  <Svg w={6} h={6} vb="0 0 6 6"><path d={d} stroke={color} strokeWidth="1.200" /></Svg>
);

function BrowseDialog() {
  return (
    <section role="dialog" aria-label="Browse for Folder" className="absolute left-[543px] top-[247px] flex h-[225px] w-[213px] flex-col border border-[#55a9ae] bg-[#f0f0f0] text-[7px] text-[#222] shadow-[0_3px_12px_rgba(0,0,0,0.5)]">
      <header className="flex h-[18px] items-center justify-between bg-white pl-[5px] pr-[6px]">
        <h2 className="text-[8px]">Browse for Folder</h2>
        <button aria-label="Close dialog"><CloseX s={8} /></button>
      </header>
      <p className="mt-[7px] pl-[6px] leading-[12px]">Select Catalog Directory</p>
      <div className="ml-2 mt-[12px] flex h-[136px] w-[195px] flex-col border border-[#848b92] bg-white">
        <div className="flex min-h-0 flex-1">
          <ul className="flex-1 overflow-hidden">
            {nodes.map((n) => (
              <li key={n.label} className={`flex h-3 items-center whitespace-nowrap ${n.depth ? "pl-[30px]" : "pl-[17px]"}`}>
                <span className="flex w-[10px] shrink-0">
                  {n.state === "closed" && <Chevron d="M2 .500L4.500 3 2 5.500" color="#888" />}
                  {n.state === "open" && <Chevron d="M.500 2L3 4.500 5.500 2" />}
                </span>
                <Svg w={11} h={n.depth ? 12 : 10}>{n.icon}</Svg>
                <span className="ml-[3px]">{n.label}</span>
              </li>
            ))}
          </ul>
          <div className="flex w-[13px] flex-col items-center bg-[#f2f2f2] py-1">
            <Chevron d="M.500 4L3 1.500 5.500 4" />
            <div className="mt-[6px] h-[11px] w-[9px] bg-[#606060]" />
            <div className="mt-auto"><Chevron d="M.500 2L3 4.500 5.500 2" /></div>
          </div>
        </div>
        <div className="flex h-[13px] items-center bg-[#f0f0f0] pl-[3px]">
          <Chevron d="M4 .500L1.500 3 4 5.500" />
          <div className="ml-[3px] h-[11px] w-[140px] bg-[#cdcdcd]" />
          <div className="ml-[20px]"><Chevron d="M2 .500L4.500 3 2 5.500" /></div>
        </div>
      </div>
      <div className="mr-2 mt-[15px] flex justify-end gap-[5px]">
        <button className="h-[14px] w-[49px] border-2 border-[#2a78cc] bg-[#e1e1e1] leading-[10px]">OK</button>
        <button className="h-[14px] w-[49px] border border-[#adadad] bg-[#e1e1e1] leading-[12px]">Cancel</button>
      </div>
      <svg width="8" height="12" viewBox="0 0 8 12" aria-hidden="true" className="absolute left-[194px] top-[70px]">
        <path d="M.500.500v9l2.200-2 1.500 3.500 1.500-.700-1.400-3.300h3z" fill="#fff" stroke="#333" strokeWidth=".7" />
      </svg>
    </section>
  );
}

function Watermark() {
  return (
    <div aria-label="Engineered MEP Solutions" className="pointer-events-none absolute bottom-[34px] right-[111px] flex h-[134px] w-[134px] flex-col items-center justify-center rounded-full border-[6px] border-white/80 font-['Liberation_Sans',sans-serif] font-bold text-white opacity-25">
      <span className="text-[14px] leading-[16px]">ENGINEERED</span>
      <span className="font-['DejaVu_Sans',sans-serif] text-[38px] leading-[42px]">MEP</span>
      <span className="text-[14px] leading-[18px]">SOLUTIONS</span>
    </div>
  );
}

export default function App() {
  return (
    <div className="relative flex h-screen min-h-[600px] flex-col overflow-hidden bg-[#383838] font-['Open_Sans','Noto_Sans',sans-serif]">
      <div className="flex bg-[#525252]">
        <button aria-label="Application menu" className="flex h-[28px] w-7 flex-col items-center bg-gradient-to-b from-[#e4e4e4] to-[#a8a8a8] text-[6px] font-bold leading-[7px] text-[#222]">
          <Svg w={26} h={20} vb="0 0 26 20">
            <path d="M4 18L10 2h5l5 16h-5l-1-4H9l-1 4zM10 11h3.500L12 5z" fill="#c8202b" />
            <path d="M4 18L10 2h2L8 18z" fill="#e4434b" />
            <path d="M20.500 12h5l-2.500 3z" fill="#222" />
          </Svg>
          MEP
        </button>
        <div className="flex min-w-0 flex-1 flex-col">
          <TitleBar />
          <RibbonTabs />
        </div>
      </div>
      <Ribbon />
      <div className="flex h-[17px] items-end pl-[14px] text-[8px] leading-[14px] text-[#bbb]">
        <a href="#" className="h-[15px] w-[82px] rounded-tl-[8px] bg-gradient-to-b from-[#666] to-[#555] pl-[7px]">Start</a>
        <a href="#" className="h-[15px] w-[80px] rounded-tl-[8px] bg-gradient-to-b from-[#8a8a8a] to-[#6d6d6d] pl-[7px] text-white">Drawing1</a>
      </div>
      <div className="flex min-h-0 flex-1">
        <PropertiesDock />
        <div className="flex min-w-0 flex-1 flex-col">
          <DrawingArea />
          <CommandLine />
        </div>
      </div>
      <StatusBar />
      <CatalogEditor />
      <CatalogDialog />
      <BrowseDialog />
      <Watermark />
    </div>
  );
}
